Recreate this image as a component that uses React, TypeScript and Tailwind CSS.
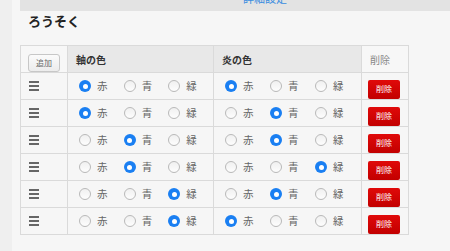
import React from 'react';

const colors = ['赤', '青', '緑'];

const rows = [
  { shaft: 0, flame: 0 },
  { shaft: 0, flame: 1 },
  { shaft: 1, flame: 1 },
  { shaft: 1, flame: 2 },
  { shaft: 2, flame: 1 },
  { shaft: 2, flame: 0 },
];

function Radio({ checked }: { checked: boolean }) {
  if (checked) {
    return (
      <span className="w-[12px] h-[12px] rounded-full bg-[#1a7ff2] flex items-center justify-center shrink-0">
        <span className="w-[5px] h-[5px] rounded-full bg-white" />
      </span>
    );
  }
  return (
    <span className="w-[12px] h-[12px] rounded-full border border-[#b9b9b9] bg-gradient-to-b from-[#f0f0f0] to-[#fdfdfd] shrink-0" />
  );
}

function RadioGroup({ value }: { value: number }) {
  return (
    <div className="flex items-center pl-[11px]">
      {colors.map((c, i) => (
        <div key={c} className="flex items-center w-[45px]">
          <Radio checked={i === value} />
          <span className="ml-[6px] text-[10.5px] text-[#666]">{c}</span>
        </div>
      ))}
    </div>
  );
}

export default function App() {
  return (
    <div
      className="flex min-h-[251px] bg-[#f6f6f6]"
      style={{ fontFamily: '"Noto Sans CJK JP", "Noto Sans", sans-serif' }}
    >
      <div className="w-[12px] bg-[#efefef]" />
      <div className="flex-1 pl-[8px]">
        <div className="h-[11px] bg-[#e3e3e3] overflow-hidden flex justify-center">
          <span className="text-[11px] leading-none text-[#3b8de0] -mt-[7px] ml-[60px]">詳細設定</span>
        </div>
        <h2 className="pl-[8px] mt-[3px] text-[13px] font-bold leading-[14px] text-[#222]">ろうそく</h2>
        <table className="mt-[17px] border-collapse w-[388px] table-fixed">
          <colgroup>
            <col className="w-[47px]" />
            <col className="w-[146px]" />
            <col className="w-[148px]" />
            <col className="w-[47px]" />
          </colgroup>
          <thead>
            <tr className="h-[27px]">
              <th className="border border-[#dadada] bg-[#f7f7f7] pl-[7px] text-left">
                <button className="h-[18px] w-[32px] rounded-[3px] border border-[#c7c7c7] bg-gradient-to-b from-[#fbfbfb] to-[#ececec] text-[8px] text-[#666] font-normal">
                  追加
                </button>
              </th>
              <th className="border border-[#dadada] bg-[#e8e8e8] pl-[8px] text-left text-[10px] font-bold text-[#333]">軸の色</th>
              <th className="border border-[#dadada] bg-[#e8e8e8] pl-[8px] text-left text-[10px] font-bold text-[#333]">炎の色</th>
              <th className="border border-[#dadada] bg-[#f7f7f7] pl-[8px] text-left text-[10px] font-normal text-[#888]">削除</th>
            </tr>
          </thead>
          <tbody>
            {rows.map((r, i) => (
              <tr key={i} className="h-[27px]">
                <td className="border border-[#dadada] pl-[8px]">
                  <div className="flex flex-col gap-[2px] w-[10px]">
                    <span className="h-[2px] bg-[#666]" />
                    <span className="h-[2px] bg-[#666]" />
                    <span className="h-[2px] bg-[#666]" />
                  </div>
                </td>
                <td className="border border-[#dadada]">
                  <RadioGroup value={r.shaft} />
                </td>
                <td className="border border-[#dadada]">
                  <RadioGroup value={r.flame} />
                </td>
                <td className="border border-[#dadada] pl-[6px]">
                  <button className="h-[19px] w-[32px] rounded-[2px] bg-gradient-to-b from-[#e00a0a] to-[#c20000] text-[8px] text-white">
                    削除
                  </button>
                </td>
              </tr>
            ))}
          </tbody>
        </table>
      </div>
    </div>
  );
}
